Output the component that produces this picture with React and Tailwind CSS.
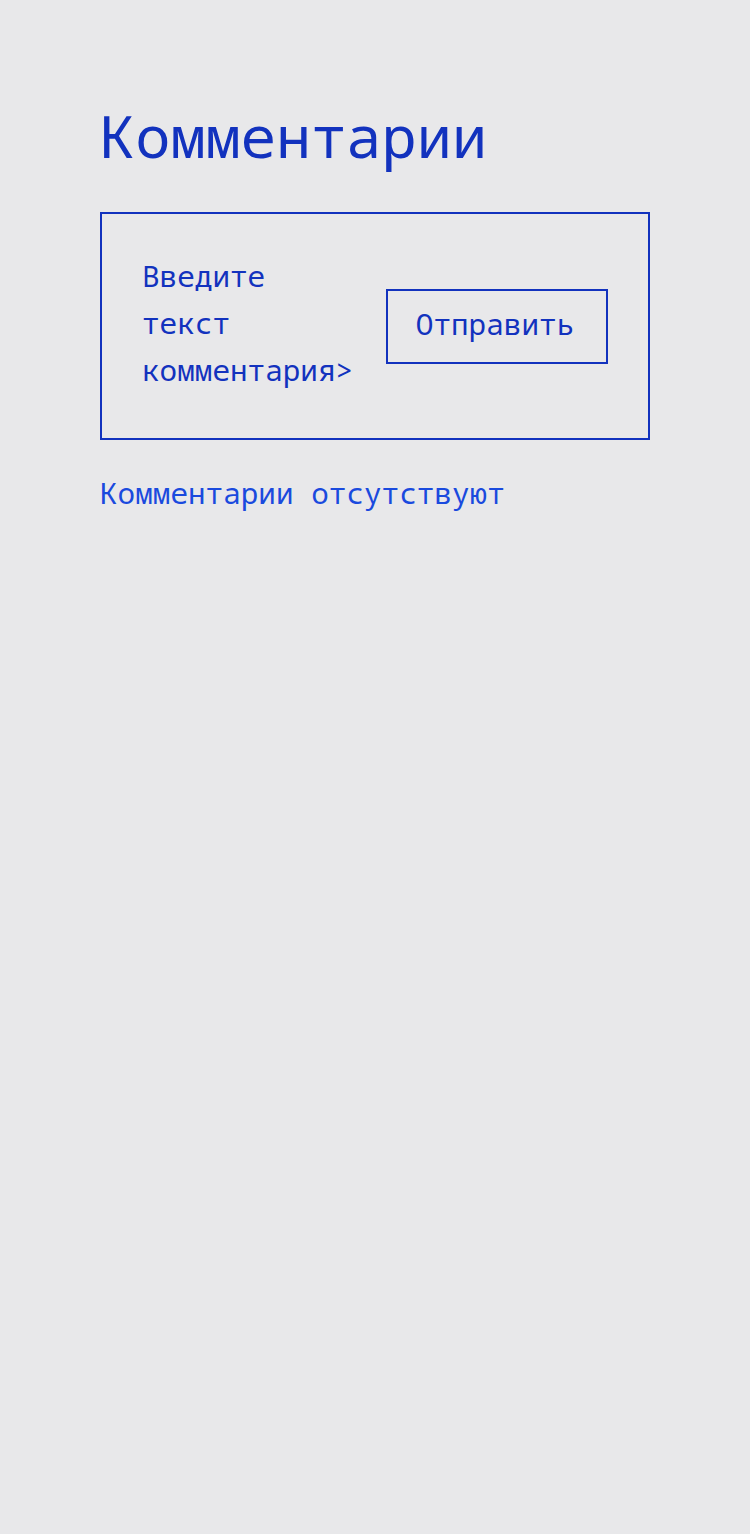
export default function App() {
  return (
    <div className="min-h-[1534px] w-full bg-[#e8e8ea] px-[100px] pt-[98px] font-['Noto_Sans_Mono','Liberation_Mono',monospace]">
      <h1 className="mb-[39px] text-[58.67px] leading-[75px] font-normal text-[#1232be]">
        Комментарии
      </h1>

      {/* form */}
      <div className="flex h-[228px] w-[550px] items-center justify-between border-2 border-[#1232be] px-[40px]">
        <div className="w-[220px] pb-[6px] text-[29.33px] leading-[47px] text-[#1232be]">
          Введите текст комментария&gt;
        </div>
        <button className="h-[75px] w-[222px] border-2 border-[#1232be] pr-[4px] pb-[3px] text-center text-[29.33px] text-[#1232be]">
          Отправить
        </button>
      </div>

      <p className="mt-[39px] text-[29.33px] leading-[28px] text-[#1a4ade]">
        Комментарии отсутствуют
      </p>
    </div>
  );
}
